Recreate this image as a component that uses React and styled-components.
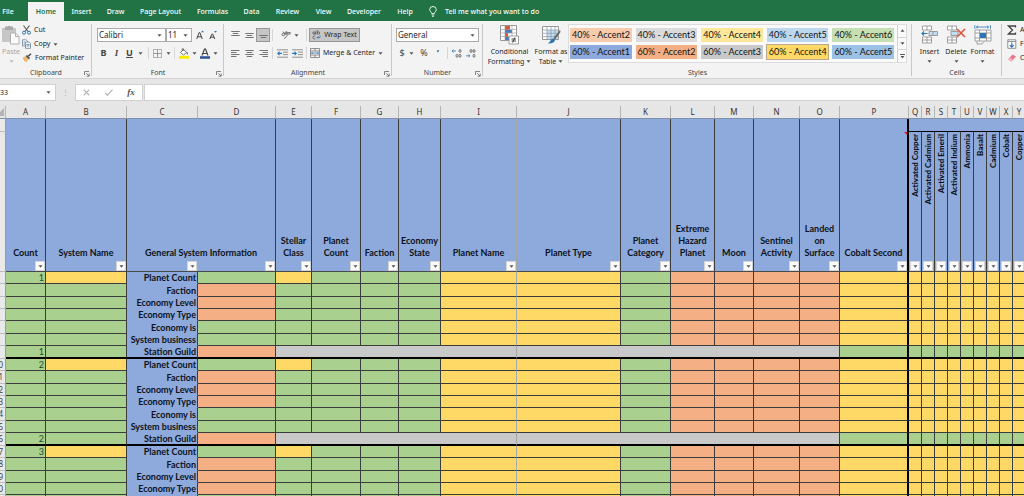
import React, { useState } from 'react';
import styled, { createGlobalStyle } from 'styled-components';

const GlobalStyle = createGlobalStyle`
  * {
    box-sizing: border-box;
  }
  body {
    margin: 0;
    background: #e6e6e6;
  }
  button, input, select {
    font: inherit;
    color: inherit;
    margin: 0;
    padding: 0;
    border: 0;
    background: none;
    border-radius: 0;
  }
  svg {
    display: block;
    flex: none;
  }
`;

const Page = styled.div`
  display: flex;
  flex-direction: column;
  height: 100vh;
  overflow: hidden;
  font-family: "Noto Sans", "Open Sans", sans-serif;
  font-size: 7px;
  line-height: 10px;
  color: #262626;
`;

/* ---- tabs ---- */

const Tabs = styled.nav`
  display: flex;
  align-items: flex-end;
  height: 21px;
  flex: none;
  background: #217346;
  color: #fff;
`;

const Tab = styled.button`
  height: 19px;
  width: ${props => props.$w}px;
  flex: none;
  font-weight: ${props => (props.$active ? 600 : 500)};
  background: ${props => (props.$active ? '#f3f3f3' : 'transparent')};
  color: ${props => (props.$active ? '#217346' : '#fff')};
  &:first-child {
    padding-right: 12px;
  }
`;

const TellMe = styled.button`
  display: flex;
  align-items: center;
  gap: 8px;
  height: 19px;
  padding-left: 8px;
  white-space: nowrap;
  font-weight: 500;
`;

/* ---- ribbon ---- */

const Ribbon = styled.div`
  display: flex;
  flex: none;
  height: 58px;
  overflow: hidden;
  background: #f3f3f3;
  border-bottom: 1px solid #d2d2d2;
`;

const Group = styled.section`
  display: flex;
  flex-direction: column;
  flex: none;
  width: ${props => props.$w}px;
  position: relative;
  &::after {
    content: "";
    position: absolute;
    right: 0;
    top: 3px;
    bottom: 2px;
    border-right: 1px solid #c8c8c8;
  }
`;

const GroupBody = styled.div`
  display: flex;
  flex: 1;
  padding: 2px ${props => props.$pad || 0}px 0;
`;

const GroupFoot = styled.div`
  display: flex;
  align-items: center;
  justify-content: center;
  height: 11px;
  color: #444;
`;

const Launcher = styled.button`
  position: absolute;
  right: 2px;
  bottom: 1px;
`;

const Stack = styled.div`
  display: flex;
  flex-direction: column;
`;

const SmallButton = styled.button`
  display: flex;
  align-items: center;
  gap: 3px;
  height: 14px;
  white-space: nowrap;
`;

const BigButton = styled.button`
  display: flex;
  flex-direction: column;
  align-items: center;
  flex: none;
  width: ${props => props.$w}px;
  padding-top: 2px;
  color: ${props => (props.$off ? '#a6a6a6' : '#262626')};
  white-space: nowrap;
  svg:first-child {
    margin-bottom: 2px;
  }
`;

const CaretLine = styled.span`
  display: flex;
  align-items: center;
  gap: 2px;
  min-height: 10px;
`;

const ToolRows = styled.div`
  display: flex;
  flex-direction: column;
  flex: 1;
  gap: 4px;
  padding-top: 5px;
`;

const ToolRow = styled.div`
  display: flex;
  align-items: center;
  height: 14px;
`;

const Tool = styled.button`
  display: flex;
  align-items: center;
  justify-content: center;
  gap: ${props => props.$gap || 0}px;
  flex: none;
  height: 14px;
  width: ${props => (props.$w ? props.$w + 'px' : 'auto')};
  white-space: nowrap;
  background: ${props => (props.$on ? '#c6c6c6' : 'none')};
  border: 1px solid ${props => (props.$on ? '#969696' : 'transparent')};
`;

const Letter = styled.span`
  font-size: ${props => props.$size || 9}px;
  font-weight: ${props => (props.$bold ? 700 : 400)};
  font-style: ${props => (props.$italic ? 'italic' : 'normal')};
  font-family: ${props => (props.$italic ? '"Liberation Serif", serif' : 'inherit')};
  text-decoration: ${props => (props.$under ? 'underline' : 'none')};
  color: #444;
`;

const Divider = styled.span`
  width: 1px;
  height: 12px;
  margin: 0 2px;
  background: #d6d6d6;
`;

const Combo = styled.label`
  display: flex;
  align-items: center;
  flex: ${props => (props.$w ? 'none' : 1)};
  width: ${props => (props.$w ? props.$w + 'px' : 'auto')};
  height: 14px;
  padding: 0 3px 0 1px;
  background: #fff;
  border: 1px solid #ababab;
  select {
    appearance: none;
    flex: 1;
    min-width: 0;
    outline: 0;
    font-size: 8px;
    line-height: 12px;
  }
`;

const Gallery = styled.div`
  display: flex;
  flex: 1;
  height: 39px;
  margin: 1px 5px 0 2px;
  border: 1px solid #dcdcdc;
  background: #fafafa;
`;

const Swatches = styled.div`
  display: grid;
  grid-template-columns: repeat(5, 1fr);
  grid-auto-rows: 14px;
  flex: 1;
  gap: 3px 4px;
  padding: 3px 3px 3px 1px;
`;

const Swatch = styled.button`
  font-family: Lato, "Noto Sans", sans-serif;
  font-size: 9px;
  line-height: 10px;
  padding-left: 2px;
  text-align: left;
  white-space: nowrap;
  color: #111;
  background: ${props => props.$fill};
  box-shadow: ${props => (props.$on ? '0 0 0 1px #b9a98a' : 'none')};
`;

const Scroller = styled.div`
  display: flex;
  flex-direction: column;
  width: 9px;
  border-left: 1px solid #d2d2d2;
  button {
    display: flex;
    align-items: center;
    justify-content: center;
    flex: 1;
  }
  button + button {
    border-top: 1px solid #d2d2d2;
  }
`;

/* ---- formula bar ---- */

const FormulaBar = styled.div`
  display: flex;
  align-items: center;
  flex: none;
  height: 27px;
  background: #e6e6e6;
`;

const NameBox = styled.label`
  display: flex;
  align-items: center;
  width: 56px;
  height: 17px;
  padding-right: 4px;
  background: #fff;
  border: solid #d0d0d0;
  border-width: 1px 1px 1px 0;
  input {
    flex: 1;
    min-width: 0;
    font-size: 7px;
    outline: 0;
  }
`;

const Grip = styled.span`
  width: 19px;
  text-align: center;
  color: #a0a0a0;
`;

const EntryTools = styled.div`
  display: flex;
  align-items: center;
  justify-content: space-around;
  width: 68px;
  height: 17px;
  margin-right: 1px;
  background: #fff;
  border: 1px solid #d0d0d0;
`;

const FormulaInput = styled.input`
  flex: 1;
  height: 17px;
  background: #fff;
  border: 1px solid #d0d0d0;
  border-right: 0;
  outline: 0;
`;

const Fx = styled.span`
  font: italic 700 9px/10px "Liberation Serif", serif;
  color: #555;
`;

/* ---- sheet ---- */

const GREEN = '#a9d08e';
const GOLD = '#ffd966';
const ORANGE = '#f4b084';
const BLUE = '#8ea9db';
const GRAY = '#c9c9c9';
const LINE = '#3c3c3c';
const INK = '#0c1220';

const SheetArea = styled.main`
  flex: 1;
  min-height: 0;
  overflow: hidden;
`;

const Sheet = styled.table`
  table-layout: fixed;
  width: 1025px;
  border-spacing: 0;
  font-family: Lato, "Noto Sans", sans-serif;
  font-size: 9px;
  line-height: 10px;
  color: ${INK};
  th, td {
    padding: 0;
    overflow: hidden;
    white-space: nowrap;
  }
`;

const ColLetter = styled.th`
  height: 13px;
  font-size: 8px;
  font-weight: 400;
  font-family: "Noto Sans", sans-serif;
  color: #333;
  background: #e6e6e6;
  border-right: 1px solid #b4b4b4;
  border-bottom: 1px solid #7f8fae;
`;

const RowNumber = styled.th`
  background: #e9e9e9;
  border-right: 1px solid #9b9b9b;
  border-bottom: 1px solid #bdbdbd;
  font-size: 8px;
  font-weight: 400;
  font-family: "Noto Sans", sans-serif;
  color: #444;
  div {
    display: flex;
    justify-content: flex-end;
    padding-right: 2px;
  }
`;

const HeadCell = styled.th`
  position: relative;
  height: ${props => (props.$small ? 13 : 140)}px;
  vertical-align: bottom;
  font-weight: 700;
  background: ${BLUE};
  border-bottom: ${props => (props.$small ? '1px solid #000' : '1px solid #4a4a4a')};
  border-right: ${props => (props.$thick ? '2px solid #000' : `1px solid ${props.$edge || LINE}`)};
`;

const HeadTitle = styled.div`
  font-size: 9px;
  line-height: 12px;
  white-space: pre-line;
  padding-bottom: 2px;
`;

const Filters = styled.div`
  display: flex;
  justify-content: flex-end;
`;

const FilterSlot = styled.div`
  display: flex;
  justify-content: flex-end;
  width: ${props => props.$w}px;
`;

const FilterButton = styled.button`
  display: flex;
  align-items: center;
  justify-content: center;
  width: 10px;
  height: 10px;
  background: #fafafa;
  border: 1px solid #d4d4d4;
`;

const Upright = styled.div`
  display: flex;
  flex-direction: column;
  justify-content: space-between;
  align-items: center;
  height: 138px;
  padding-top: 1px;
  font-size: 8px;
  font-weight: 900;
  span {
    writing-mode: vertical-rl;
    transform: rotate(180deg);
    line-height: 12px;
  }
`;

const Note = styled.svg`
  position: absolute;
  right: 0;
  top: 13px;
`;

const Cell = styled.td`
  height: ${props => props.$h}px;
  line-height: 11px;
  text-align: right;
  font-weight: ${props => (props.$bold ? 700 : 400)};
  color: ${props => (props.$bold ? INK : '#1c4f26')};
  background: ${props => props.$fill};
  border-bottom: ${props => (props.$last ? '2px solid #000' : `1px solid ${props.$bold ? props.$fill : LINE}`)};
  border-right: ${props => (props.$thick ? '2px solid #000' : `1px solid ${props.$edge || LINE}`)};
  && {
    padding-right: 1px;
  }
`;

const Caret = ({ color = '#555' }) => (
  <svg width="5" height="3" viewBox="0 0 5 3"><path d="M0.5 0.3h4L2.5 2.7z" fill={color} /></svg>
);

const CaretUp = () => (
  <svg width="5" height="3" viewBox="0 0 5 3"><path d="M0.5 2.7h4L2.5 0.3z" fill="#555" /></svg>
);

const BulbIcon = () => (
  <svg width="8" height="11" viewBox="0 0 8 11" fill="none" stroke="#fff" strokeWidth="0.9">
    <path d="M2.7 7.6C2.6 6 .7 5.4.7 3.6a3.3 3.1 0 0 1 6.6 0C7.3 5.4 5.4 6 5.3 7.6zM2.7 9h2.6M3.2 10.4h1.6" />
  </svg>
);

const PasteIcon = () => (
  <svg width="18" height="20" viewBox="0 0 18 20">
    <path d="M0 3h14v14H0z" fill="#c6c6c6" />
    <path d="M3 1.5h2.500a2 1.500 0 0 1 3 0H11v3.500H3z" fill="#a8a8a8" />
    <path d="M8.500 8h5l3.500 3.500V19H8.500z" fill="#fbfbfb" stroke="#b0b0b0" />
    <path d="M13.500 8v3.500H17" fill="none" stroke="#b0b0b0" />
  </svg>
);

const CutIcon = () => (
  <svg width="9" height="10" viewBox="0 0 9 10" fill="none">
    <path d="M1.5.5L6 6.500M7.500.5L3 6.500" stroke="#5a5a5a" strokeWidth="1.1" />
    <circle cx="2" cy="7.7" r="1.5" stroke="#2e75b6" />
    <circle cx="7" cy="7.7" r="1.5" stroke="#2e75b6" />
  </svg>
);

const CopyIcon = () => (
  <svg width="9" height="10" viewBox="0 0 9 10" stroke="#6f7d8c" strokeWidth="0.8" fill="#fff">
    <path d="M.5.8h3.500L5.500 2v5h-5z" />
    <path d="M3.500 3H7l1.500 1.500V9.300h-5z" />
    <path d="M4.500 5.500h3M4.500 7h3M1.500 3h1.500M1.500 5h1.500" stroke="#2e75b6" />
  </svg>
);

const BrushIcon = () => (
  <svg width="10" height="10" viewBox="0 0 10 10">
    <path d="M.8 4.500l3-1.200 2.500 2.500L4.500 9.200C2.500 8.500 1 6.800.8 4.500z" fill="#f0b56a" />
    <path d="M3.500 3l1.600-1 2.900 2.900-1 1.600z" fill="#555" />
    <path d="M6.300 3.300L9 .8" stroke="#444" strokeWidth="1.5" />
  </svg>
);

const LauncherIcon = () => (
  <svg width="6" height="7" viewBox="0 0 6 7" fill="none" stroke="#666" strokeWidth="0.8">
    <path d="M.5 5V1.500H5M2.200 3.200L5 6M5.200 3.500v2.700H2.500" />
  </svg>
);

const BordersIcon = () => (
  <svg width="9" height="9" viewBox="0 0 9 9" fill="none" stroke="#777">
    <path d="M.5.5h8v8h-8z" strokeDasharray="1 1" />
    <path d="M4.500.5v8M.5 4.500h8" strokeWidth="0.7" />
  </svg>
);

const FillIcon = () => (
  <svg width="10" height="11" viewBox="0 0 10 11">
    <path d="M1.500 4.500L4.500 1.500 7.500 4.500 4.500 7z" fill="#fff" stroke="#555" strokeWidth="0.8" />
    <path d="M3.200 3V.8h1.500V3" fill="none" stroke="#555" strokeWidth="0.7" />
    <path d="M7.500 3.500c1.300.5 1.600 1.700 1.400 3.300-1-.5-1.400-1.500-1.400-3.300z" fill="#2e75b6" />
    <path d="M0 7.800h10v3H0z" fill="#ffeb00" />
  </svg>
);

const FontColorIcon = () => (
  <svg width="10" height="11" viewBox="0 0 10 11">
    <path d="M2 7.500L4.500 1h1L8 7.500M3 5.500h4" fill="none" stroke="#444" strokeWidth="1.2" />
    <path d="M0 8.200h10v2.600H0z" fill="#2f5597" />
  </svg>
);

const GrowIcon = ({ up }) => (
  <svg width="8" height="10" viewBox="0 0 8 10">
    <path d={up ? 'M.7 9L3.2 2.5h.6L6.3 9M1.5 6.8h4' : 'M.8 9L3 4h.6L5.8 9M1.5 7.2h3.6'} fill="none" stroke="#444" strokeWidth="1" />
    <path d={up ? 'M5 2.2L6.5.5 8 2.2z' : 'M5 1h3L6.5 2.7z'} fill="#2e75b6" />
  </svg>
);

// stacked text lines, every second one shorter
const LinesIcon = ({ y = 1, count = 4, align = 'left' }) => (
  <svg width="9" height="9" viewBox="0 0 9 9" stroke="#666">
    {Array.from({ length: count }, (_, i) => {
      const len = i % 2 ? 5.5 : 8.5;
      const x = align === 'left' ? 0 : align === 'center' ? (9 - len) / 2 : 9 - len;
      return <path key={i} d={`M${x} ${y + i * 2 + 0.5}h${len}`} strokeWidth="0.9" />;
    })}
  </svg>
);

const OrientIcon = () => (
  <svg width="10" height="10" viewBox="0 0 10 10" fill="none" stroke="#666" strokeWidth="0.9">
    <circle cx="2.3" cy="4.5" r="1.3" />
    <path d="M2 1.500l2.500 3.500M5.500 1.500l.5 3" />
    <circle cx="5.3" cy="3" r="1.2" />
    <path d="M3 9L9 2.500M6.800 2.700L9 2.500 8.900 4.700" />
  </svg>
);

const IndentIcon = ({ out }) => (
  <svg width="11" height="9" viewBox="0 0 11 9" fill="none" stroke="#777" strokeWidth="0.8">
    <path d="M0 .8h11M6 3.200h5M6 5.600h5M0 8.200h11" />
    <path d={out ? 'M5 4.4H.8M2.5 2.7L.8 4.4l1.7 1.7' : 'M0 4.4h4.2M2.6 2.7l1.7 1.7-1.7 1.7'} stroke="#2e75b6" strokeWidth="1.1" />
  </svg>
);

const WrapIcon = () => (
  <svg width="9" height="10" viewBox="0 0 9 10" fill="none" stroke="#555" strokeWidth="0.8">
    <circle cx="2" cy="3" r="1.2" />
    <path d="M3.500 1.500v3M5.200 0v4.300" />
    <circle cx="6.5" cy="3" r="1.2" />
    <path d="M3.200 6.200a1.500 1.500 0 1 0 0 2.500" />
    <path d="M8 5.500v2H5M6.200 6.300L5 7.500l1.200 1.200" stroke="#2e75b6" />
  </svg>
);

const MergeIcon = () => (
  <svg width="10" height="10" viewBox="0 0 10 10" fill="none" stroke="#777" strokeWidth="0.8">
    <path d="M.5.5h9v9h-9zM.5 3h9M.5 7h9M5 .5V3M5 7v2.500" />
    <path d="M1.500 5h7M2.500 4L1.500 5l1 1M7.500 4l1 1-1 1" stroke="#2e75b6" />
  </svg>
);

const DecimalIcon = ({ more }) => (
  <svg width="10" height="9" viewBox="0 0 10 9" fill="none" stroke="#555" strokeWidth="0.8">
    <ellipse cx="8" cy="2" rx="1" ry="1.5" />
    {more ? (
      <>
        <path d="M0 2h4M1.500.6L0 2l1.500 1.400" stroke="#2e75b6" />
        <ellipse cx="5" cy="6.8" rx="1" ry="1.5" />
        <ellipse cx="8" cy="6.8" rx="1" ry="1.5" />
      </>
    ) : (
      <>
        <ellipse cx="5" cy="2" rx="1" ry="1.5" />
        <path d="M0 6.800h4M2.500 5.400L4 6.800 2.500 8.200" stroke="#2e75b6" />
        <ellipse cx="8" cy="6.8" rx="1" ry="1.5" />
      </>
    )}
  </svg>
);

const ConditionalIcon = () => (
  <svg width="19" height="20" viewBox="0 0 19 20">
    <path d="M.5.5h16v15H.5z" fill="#fff" stroke="#999" />
    <path d="M5 1h5v4H5z" fill="#d9583b" />
    <path d="M5 5h7v3H5z" fill="#4a7ebb" />
    <path d="M5 8h3v4H5z" fill="#d9583b" />
    <path d="M5 12h4v3H5z" fill="#4a7ebb" />
    <path d="M.5 4.500h16M.5 8h16M.5 11.500h16M5 .5v15M12 .5v15" stroke="#999" strokeWidth="0.6" fill="none" />
    <path d="M9 11h9.500v8H9z" fill="#fff" stroke="#888" strokeWidth="0.8" />
    <path d="M11.500 14h4.500M11.500 16h4.500M15 12.500l-2.500 5" stroke="#333" strokeWidth="0.9" />
  </svg>
);

const FormatTableIcon = () => (
  <svg width="19" height="20" viewBox="0 0 19 20">
    <path d="M.5 1.500h16v13H.5z" fill="#fff" stroke="#999" />
    <path d="M5 5h11v9H5z" fill="#c3dcf1" />
    <path d="M.5 5h16M.5 8.300h16M.5 11.500h16M5 1.500v13M9 1.500v13M13 1.500v13" stroke="#8c9aa8" strokeWidth="0.7" fill="none" />
    <path d="M18 5l-6.500 8 1.700 1.300L18.500 7z" fill="#666" />
    <path d="M11.200 13.200l2 1.600c-.5 2.700-3.200 4.200-7.700 3.700 2.700-.7 3-4.500 5.700-5.300z" fill="#2e75b6" />
  </svg>
);

const InsertIcon = () => (
  <svg width="17" height="20" viewBox="0 0 17 20" fill="#fff" stroke="#8a8a8a" strokeWidth="0.8">
    <path d="M1.500 1h9v4h-9zM6 1v4M1.500 12h9v6h-9zM6 12v6M1.500 15h9" />
    <path d="M8 6.500h8.500v4H8zM12 6.500v4" fill="#c3dcf1" />
    <path d="M6.500 8.500H1M3 6.500l-2 2 2 2" fill="none" stroke="#2e75b6" strokeWidth="1.1" />
  </svg>
);

const DeleteIcon = () => (
  <svg width="20" height="20" viewBox="0 0 20 20" fill="#fff" stroke="#8a8a8a" strokeWidth="0.8">
    <path d="M1.500 1h9v4h-9zM6 1v4M1.500 12h9v6h-9zM6 12v6M1.500 15h9" />
    <path d="M5 6.500h7v4H5z" fill="#c3dcf1" />
    <path d="M11 4l8 8M19 4l-8 8" fill="none" stroke="#e0503a" strokeWidth="1.6" />
  </svg>
);

const FormatIcon = () => (
  <svg width="18" height="20" viewBox="0 0 18 20" fill="#fff" stroke="#8a8a8a" strokeWidth="0.8">
    <path d="M2 2h13M4 .7L2.500 2 4 3.300M13 .7L14.500 2 13 3.300M.8.2v3.600M16.500.2v3.600" fill="none" stroke="#2e75b6" />
    <path d="M1 5h16v11H1zM1 8h16M1 13h16M5.500 5v11M12.500 5v11" />
    <path d="M6 8h6v5H6z" fill="#2e75b6" stroke="none" />
    <path d="M3 16.500v2.700M3 19h5l2-2.500" fill="none" />
  </svg>
);

const SigmaIcon = () => (
  <svg width="10" height="10" viewBox="0 0 10 10" fill="none" stroke="#444" strokeWidth="1.3">
    <path d="M8.500 2.500V1H1.500l4 4-4 4h7V7.500" />
  </svg>
);

const DownIcon = () => (
  <svg width="10" height="10" viewBox="0 0 10 10" fill="#fff" stroke="#777" strokeWidth="0.8">
    <path d="M.8.8h8v8.500h-8zM.8 2.500h8" />
    <path d="M4.800 3.500v4.500M2.800 6.200l2 2 2-2" fill="none" stroke="#2e75b6" strokeWidth="1.2" />
  </svg>
);

const EraserIcon = () => (
  <svg width="10" height="10" viewBox="0 0 10 10">
    <path d="M1 6.500L5.500 1.500 9 3.500 4.500 8.500z" fill="#e8788f" />
    <path d="M1 6.500l1.800-2L6 6.800 4.500 8.500z" fill="#f3b5c1" />
  </svg>
);

const tabs = [
  ['File', 28], ['Home', 36], ['Insert', 35], ['Draw', 33], ['Page Layout', 57], ['Formulas', 47],
  ['Data', 31], ['Review', 41], ['View', 31], ['Developer', 50], ['Help', 32],
];

const swatches = [
  ['40% - Accent2', '#f8cbad'], ['40% - Accent3', '#dbdbdb'], ['40% - Accent4', '#ffe699'],
  ['40% - Accent5', '#bdd7ee'], ['40% - Accent6', '#c6e0b4'],
  ['60% - Accent1', '#8ea9db'], ['60% - Accent2', '#f4b084'], ['60% - Accent3', '#c9c9c9'],
  ['60% - Accent4', '#ffd966'], ['60% - Accent5', '#9bc2e6'],
];

const columns = [
  ['A', 40], ['B', 81], ['C', 71], ['D', 78], ['E', 36], ['F', 49], ['G', 38], ['H', 42], ['I', 76],
  ['J', 104], ['K', 50], ['L', 44], ['M', 39], ['N', 46], ['O', 40], ['P', 69], ['Q', 13], ['R', 13],
  ['S', 13], ['T', 13], ['U', 13], ['V', 13], ['W', 13], ['X', 13], ['Y', 13],
];

const heads = [
  'Count', 'System Name', 'General System Information', 'Stellar\nClass', 'Planet\nCount', 'Faction',
  'Economy\nState', 'Planet Name', 'Planet Type', 'Planet\nCategory', 'Extreme\nHazard\nPlanet', 'Moon',
  'Sentinel\nActivity', 'Landed\non\nSurface', 'Cobalt Second',
];

const materials = [
  'Activated Copper', 'Activated Cadmium', 'Activated Emeril', 'Activated Indium', 'Ammonia', 'Basalt',
  'Cadmium', 'Cobalt', 'Copper',
];

// label, colour of the value cell, row height
const infoRows = [
  ['Planet Count', GREEN, 12],
  ['Faction', ORANGE, 13],
  ['Economy Level', ORANGE, 12],
  ['Economy Type', ORANGE, 12],
  ['Economy is', GREEN, 13],
  ['System business', GREEN, 12],
  ['Station Guild', ORANGE, 13],
];

const rowFills = [GREEN, GREEN, GREEN, GREEN, GOLD, GOLD, GREEN, ORANGE, ORANGE, ORANGE, ORANGE];

const Filter = ({ name }) => (
  <FilterButton aria-label={`Filter ${name}`}><Caret /></FilterButton>
);

const RibbonGroup = ({ title, width, pad, launcher, children }) => (
  <Group $w={width}>
    <GroupBody $pad={pad}>{children}</GroupBody>
    <GroupFoot>{title}</GroupFoot>
    {launcher && <Launcher aria-label={`${title} settings`}><LauncherIcon /></Launcher>}
  </Group>
);

const SystemRow = ({ count, index, number }) => {
  const [label, valueFill, h] = infoRows[index];
  const first = index === 0;
  const last = index === 6;
  const tail = last ? GREEN : GOLD;
  return (
    <tr>
      <RowNumber><div>{number > 9 ? number % 10 : ''}</div></RowNumber>
      <Cell $h={h} $fill={GREEN} $last={last}>{first || last ? count : ''}</Cell>
      <Cell $h={h} $fill={first ? GOLD : GREEN} $last={last} />
      <Cell $h={h} $fill={BLUE} $last={last} $bold>{label}</Cell>
      <Cell $h={h} $fill={valueFill} $last={last} />
      {last ? (
        <>
          <Cell $h={h} $fill={GRAY} colSpan={5} $last $edge="#a6a6a6" />
          <Cell $h={h} $fill={GRAY} colSpan={6} $last />
        </>
      ) : (
        rowFills.map((fill, i) => (
          <Cell key={i} $h={h} $fill={first && i === 0 ? GOLD : fill} $edge={i === 4 ? '#a6a6a6' : undefined} />
        ))
      )}
      <Cell $h={h} $fill={tail} $last={last} $thick />
      {materials.map(name => <Cell key={name} $h={h} $fill={tail} $last={last} />)}
    </tr>
  );
};

const App = () => {
  const [activeTab, setActiveTab] = useState('Home');
  const [font, setFont] = useState('Calibri');
  const [size, setSize] = useState('11');
  const [format, setFormat] = useState('General');
  const [cellRef, setCellRef] = useState('33');
  const [formula, setFormula] = useState('');
  const [style, setStyle] = useState('60% - Accent4');

  return (
    <Page>
      <GlobalStyle />
      <Tabs>
        {tabs.map(([name, w]) => (
          <Tab key={name} $w={w} $active={name === activeTab} onClick={() => setActiveTab(name)}>{name}</Tab>
        ))}
        <TellMe><BulbIcon />Tell me what you want to do</TellMe>
      </Tabs>

      <Ribbon>
        <RibbonGroup title="Clipboard" width={92} launcher>
          <BigButton $w={22} $off><PasteIcon />Paste<CaretLine><Caret color="#bbb" /></CaretLine></BigButton>
          <Stack>
            <SmallButton><CutIcon />Cut</SmallButton>
            <SmallButton><CopyIcon />Copy <Caret /></SmallButton>
            <SmallButton><BrushIcon />Format Painter</SmallButton>
          </Stack>
        </RibbonGroup>

        <RibbonGroup title="Font" width={132} pad={5} launcher>
          <ToolRows>
            <ToolRow>
              <Combo $w={69}>
                <select aria-label="Font" value={font} onChange={e => setFont(e.target.value)}>
                  <option>Calibri</option>
                  <option>Arial</option>
                </select>
                <Caret />
              </Combo>
              <Combo $w={26}>
                <select aria-label="Font size" value={size} onChange={e => setSize(e.target.value)}>
                  <option>11</option>
                  <option>12</option>
                </select>
                <Caret />
              </Combo>
              <Tool $w={15} aria-label="Increase font size"><GrowIcon up /></Tool>
              <Tool $w={12} aria-label="Decrease font size"><GrowIcon /></Tool>
            </ToolRow>
            <ToolRow>
              <Tool $w={13}><Letter $bold>B</Letter></Tool>
              <Tool $w={13}><Letter $bold $italic>I</Letter></Tool>
              <Tool $w={23} $gap={5}><Letter $bold $under>U</Letter><Caret /></Tool>
              <Divider />
              <Tool $w={21} $gap={4} aria-label="Borders"><BordersIcon /><Caret /></Tool>
              <Divider />
              <Tool $w={21} $gap={3} aria-label="Fill color"><FillIcon /><Caret /></Tool>
              <Tool $w={21} $gap={3} aria-label="Font color"><FontColorIcon /><Caret /></Tool>
            </ToolRow>
          </ToolRows>
        </RibbonGroup>

        <RibbonGroup title="Alignment" width={168} pad={4} launcher>
          <ToolRows>
            <ToolRow>
              <Tool $w={14} aria-label="Top align"><LinesIcon y={0} count={3} align="center" /></Tool>
              <Tool $w={14} aria-label="Middle align"><LinesIcon y={2} count={3} align="center" /></Tool>
              <Tool $w={14} $on aria-label="Bottom align"><LinesIcon y={4} count={2} align="center" /></Tool>
              <Divider />
              <Tool $w={29} $gap={3} aria-label="Orientation"><OrientIcon /><Caret /></Tool>
              <Divider />
              <Tool $w={51} $gap={3} $on><WrapIcon />Wrap Text</Tool>
            </ToolRow>
            <ToolRow>
              <Tool $w={14} aria-label="Align left"><LinesIcon /></Tool>
              <Tool $w={14} aria-label="Center"><LinesIcon align="center" /></Tool>
              <Tool $w={14} aria-label="Align right"><LinesIcon align="right" /></Tool>
              <Divider />
              <Tool $w={15} aria-label="Decrease indent"><IndentIcon out /></Tool>
              <Tool $w={14} aria-label="Increase indent"><IndentIcon /></Tool>
              <Divider />
              <Tool $gap={3}><MergeIcon />Merge &amp; Center <Caret /></Tool>
            </ToolRow>
          </ToolRows>
        </RibbonGroup>

        <RibbonGroup title="Number" width={91} pad={4} launcher>
          <ToolRows>
            <ToolRow>
              <Combo>
                <select aria-label="Number format" value={format} onChange={e => setFormat(e.target.value)}>
                  <option>General</option>
                  <option>Number</option>
                </select>
                <Caret />
              </Combo>
            </ToolRow>
            <ToolRow>
              <Tool $w={21} $gap={4}><Letter>$</Letter><Caret /></Tool>
              <Tool $w={14}><Letter>%</Letter></Tool>
              <Tool $w={14}><Letter $bold>’</Letter></Tool>
              <Divider />
              <Tool $w={14} aria-label="Increase decimal"><DecimalIcon more /></Tool>
              <Tool $w={14} aria-label="Decrease decimal"><DecimalIcon /></Tool>
            </ToolRow>
          </ToolRows>
        </RibbonGroup>

        <RibbonGroup title="Styles" width={429}>
          <BigButton $w={53}>
            <ConditionalIcon />Conditional<CaretLine>Formatting <Caret /></CaretLine>
          </BigButton>
          <BigButton $w={30}>
            <FormatTableIcon />Format as<CaretLine>Table <Caret /></CaretLine>
          </BigButton>
          <Gallery>
            <Swatches>
              {swatches.map(([name, fill]) => (
                <Swatch key={name} $fill={fill} $on={name === style} onClick={() => setStyle(name)}>{name}</Swatch>
              ))}
            </Swatches>
            <Scroller>
              <button aria-label="Previous styles"><CaretUp /></button>
              <button aria-label="Next styles"><Caret /></button>
              <button aria-label="More styles">
                <svg width="5" height="5" viewBox="0 0 5 5"><path d="M0 0h5v1H0zM.5 2h4L2.500 4.500z" fill="#555" /></svg>
              </button>
            </Scroller>
          </Gallery>
        </RibbonGroup>

        <RibbonGroup title="Cells" width={90} pad={4}>
          <BigButton $w={27}><InsertIcon />Insert<CaretLine><Caret /></CaretLine></BigButton>
          <BigButton $w={26}><DeleteIcon />Delete<CaretLine><Caret /></CaretLine></BigButton>
          <BigButton $w={27}><FormatIcon />Format<CaretLine><Caret /></CaretLine></BigButton>
        </RibbonGroup>

        <RibbonGroup title="" width={120} pad={5}>
          <Stack>
            <SmallButton><SigmaIcon />AutoSum</SmallButton>
            <SmallButton><DownIcon />Fill</SmallButton>
            <SmallButton><EraserIcon />Clear</SmallButton>
          </Stack>
        </RibbonGroup>
      </Ribbon>

      <FormulaBar>
        <NameBox>
          <input aria-label="Name box" value={cellRef} onChange={e => setCellRef(e.target.value)} />
          <Caret />
        </NameBox>
        <Grip>⋮</Grip>
        <EntryTools>
          <button aria-label="Cancel">
            <svg width="7" height="7" viewBox="0 0 7 7" stroke="#b4b4b4" strokeWidth="1.2"><path d="M.7.7l5.600 5.600M6.300.7L.7 6.300" /></svg>
          </button>
          <button aria-label="Enter">
            <svg width="8" height="7" viewBox="0 0 8 7" fill="none" stroke="#b4b4b4" strokeWidth="1.2"><path d="M.5 4l2 2.200L7.500.7" /></svg>
          </button>
          <button aria-label="Insert function"><Fx>fx</Fx></button>
        </EntryTools>
        <FormulaInput aria-label="Formula" value={formula} onChange={e => setFormula(e.target.value)} />
      </FormulaBar>

      <SheetArea>
        <Sheet>
          <colgroup>
            <col style={{ width: 6 }} />
            {columns.map(([name, w]) => <col key={name} style={{ width: w }} />)}
          </colgroup>
          <thead>
            <tr>
              <ColLetter>
                <svg width="4" height="8" viewBox="0 0 4 8"><path d="M4 0v8H0V4z" fill="#b4b4b4" /></svg>
              </ColLetter>
              {columns.map(([name]) => <ColLetter key={name}>{name}</ColLetter>)}
            </tr>
            <tr>
              <RowNumber />
              {heads.map((title, i) => (
                <HeadCell
                  key={title}
                  rowSpan={2}
                  colSpan={i === 2 ? 2 : 1}
                  $thick={i === 14}
                  $edge={i === 7 ? '#a6a6a6' : undefined}
                >
                  {i === 14 && <Note width="3" height="3" viewBox="0 0 3 3"><path d="M0 0h3v3z" fill="#e3122d" /></Note>}
                  <HeadTitle>{title}</HeadTitle>
                  <Filters>
                    {i === 2 && <Filter name="information" />}
                    <FilterSlot $w={i === 2 ? 78 : 10}><Filter name={title} /></FilterSlot>
                  </Filters>
                </HeadCell>
              ))}
              <HeadCell $small colSpan={9} />
            </tr>
            <tr>
              <RowNumber />
              {materials.map(name => (
                <HeadCell key={name}>
                  <Upright><span>{name}</span><Filter name={name} /></Upright>
                </HeadCell>
              ))}
            </tr>
          </thead>
          <tbody>
            {Array.from({ length: 21 }, (_, i) => (
              <SystemRow key={i} number={i + 3} index={i % 7} count={Math.floor(i / 7) + 1} />
            ))}
          </tbody>
        </Sheet>
      </SheetArea>
    </Page>
  );
};

export default App;
